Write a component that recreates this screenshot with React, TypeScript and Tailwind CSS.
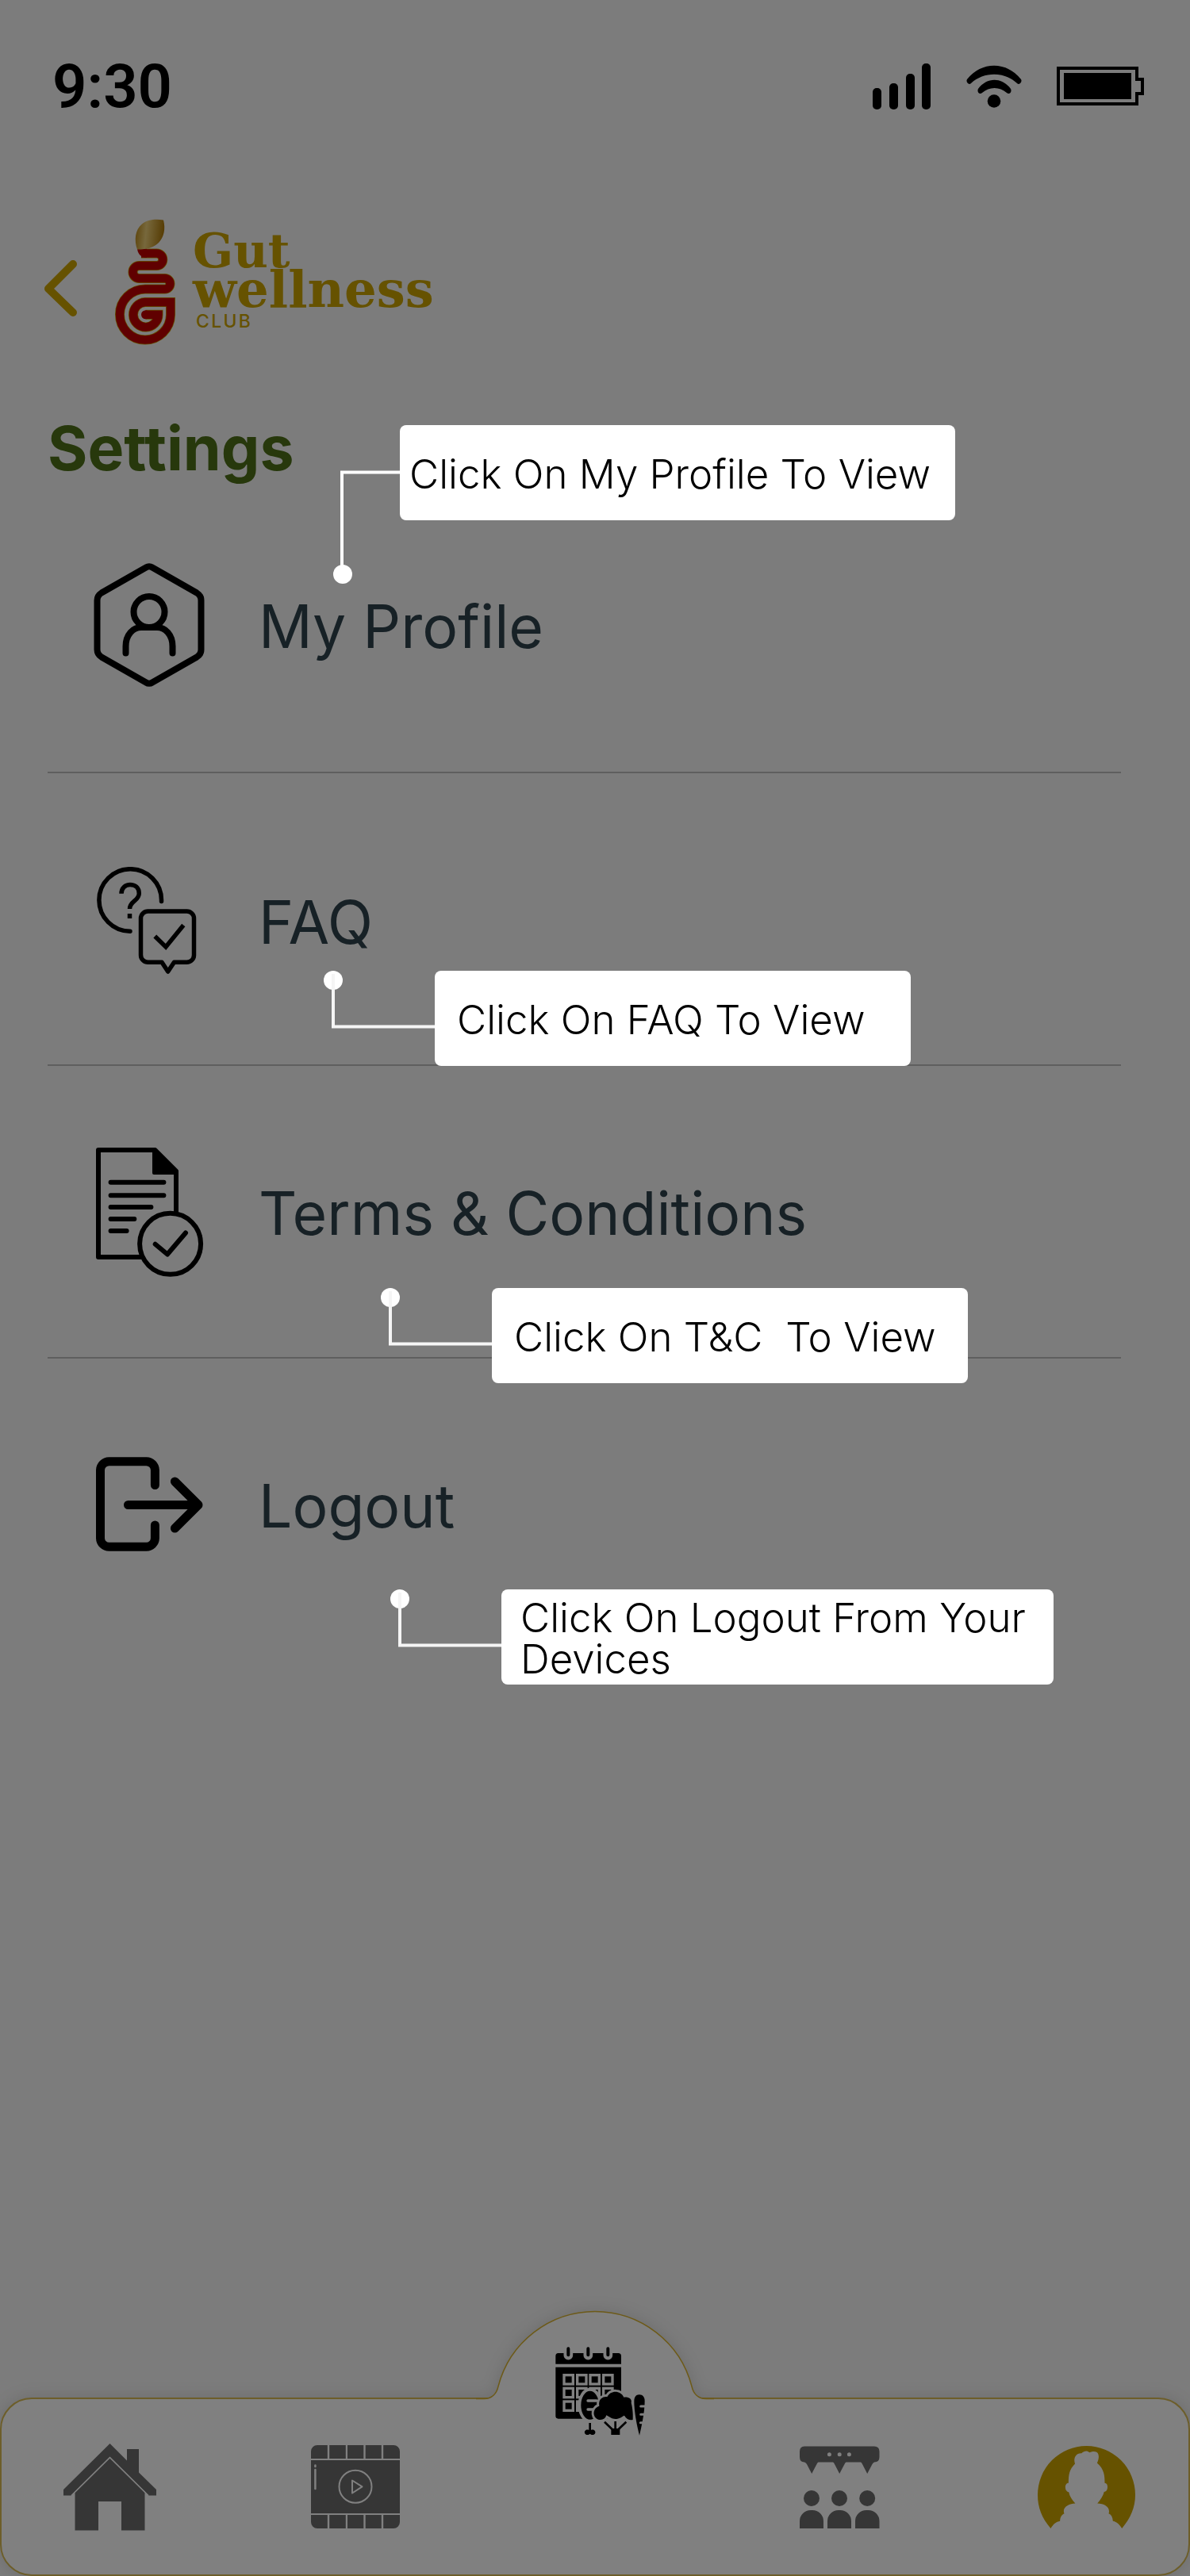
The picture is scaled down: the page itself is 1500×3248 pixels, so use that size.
import type { ReactNode } from "react";

function SignalIcon() {
  return (
    <svg width="74" height="58" viewBox="1100 80 74 58" aria-hidden="true">
      <rect x="1100" y="111" width="11" height="27" rx="5" />
      <rect x="1121" y="105" width="11" height="33" rx="5" />
      <rect x="1142" y="93" width="11" height="45" rx="5" />
      <rect x="1162" y="80" width="11" height="58" rx="5" />
    </svg>
  );
}

function WifiIcon() {
  return (
    <svg width="70" height="54" viewBox="0 0 70 54" aria-hidden="true">
      <path d="M1 18C19-5 51-5 69 18C71 21 67 26 64 23C48 8 22 8 6 23C3 26-1 21 1 18Z" />
      <path d="M15 30C26 15 45 15 56 30C58 34 54 38 51 35C42 27 29 27 20 35C17 38 13 34 15 30Z" />
      <circle cx="35" cy="45.500" r="8.300" />
    </svg>
  );
}

function BatteryIcon() {
  return (
    <svg width="110" height="50" viewBox="0 0 110 50" aria-hidden="true">
      <path
        d="M2 2H101V16H108V34H101V47H2Z"
        fill="none"
        stroke="#000"
        strokeWidth="4"
      />
      <rect x="9" y="8" width="85" height="33" />
    </svg>
  );
}

function BackIcon() {
  return (
    <svg width="41" height="72" viewBox="0 0 41 72" fill="none" aria-hidden="true">
      <path
        d="M36 5L5 36L36 66"
        stroke="#665200"
        strokeWidth="10"
        strokeLinecap="round"
        strokeLinejoin="round"
      />
    </svg>
  );
}

const TUBE =
  "M177 319.500H196.500A7.750 7.750 0 0 1 196.500 335H174.500A8 8 0 0 0 174.500 351H206.700A6.750 6.750 0 0 1 206.700 364.500H182A32 32 0 1 0 214 397V381H182A15.750 15.750 0 1 0 198.500 396.750H182.500";

function LogoMark() {
  return (
    <svg width="76" height="160" viewBox="144 276 76 160" fill="none" aria-hidden="true">
      <defs>
        <linearGradient id="leaf" x1="0" y1="0" x2="1" y2="0.100">
          <stop offset="0" stopColor="#5c430a" />
          <stop offset="0.400" stopColor="#77683c" />
          <stop offset="1" stopColor="#573d05" />
        </linearGradient>
      </defs>
      <path d={TUBE} stroke="#665200" strokeWidth="12" />
      <path d={TUBE} stroke="#600000" strokeWidth="10.500" />
      <circle cx="182.500" cy="396.750" r="5.500" fill="#600000" />
      <path d="M172 313.500H184V325H184C177 325 172.500 320 172 313.500Z" fill="#600000" />
      <path
        d="M172 314.500C168 303 169 290 178 282.500C185 276.500 196 276 205 277.500C208 289 205.500 299 199 306C193 312 185 314.500 172 314.500Z"
        fill="url(#leaf)"
      />
    </svg>
  );
}

function ProfileIcon() {
  return (
    <svg
      width="140"
      height="156"
      viewBox="118 710 140 156"
      fill="none"
      stroke="#000"
      strokeWidth="8"
      strokeLinecap="round"
      aria-hidden="true"
    >
      <path d="M184 715.500Q188 713 192 715.500L248 747.500Q253.500 751 253.500 757V819Q253.500 825 248 828.500L192 860.500Q188 863 184 860.500L128 828.500Q122.500 825 122.500 819V757Q122.500 751 128 747.500Z" />
      <circle cx="188" cy="771.500" r="19.500" />
      <path d="M158.500 823.500V815C158.500 800 168 791 178 791H198C208 791 217.500 800 217.500 815V823.500" />
    </svg>
  );
}

function FaqIcon() {
  return (
    <svg
      width="140"
      height="136"
      viewBox="118 1094 140 136"
      fill="none"
      stroke="#000"
      strokeWidth="5.500"
      aria-hidden="true"
    >
      <path d="M203.500 1137.500V1136A39.300 39.300 0 1 0 164 1175.300" strokeLinecap="round" />
      <path d="M153 1127.700C153 1120.500 158 1116.500 164 1116.500C170.500 1116.500 175.300 1120.500 175.300 1127.500C175.300 1137 163.500 1137 163.500 1147" />
      <path d="M163.500 1153V1159" />
      <path
        d="M187 1150H235.500A9 9 0 0 1 244.500 1159V1205.300A9 9 0 0 1 235.500 1214.300H219.500L211.700 1226L204 1214.300H187A9 9 0 0 1 177.500 1205.300V1159A9 9 0 0 1 187 1150Z"
        strokeLinejoin="round"
      />
      <path d="M195.300 1181.500L209 1195L231.300 1167.500" />
    </svg>
  );
}

function TermsIcon() {
  return (
    <svg
      width="140"
      height="166"
      viewBox="118 1444 140 166"
      fill="none"
      stroke="#000"
      strokeWidth="6"
      strokeLinecap="round"
      strokeLinejoin="round"
      aria-hidden="true"
    >
      <path d="M178.500 1584H124V1449H195.500L222 1475.500V1527" strokeLinecap="butt" />
      <path d="M194 1451V1478H221Z" fill="#000" strokeWidth="4" />
      <path d="M139.600 1489.700H206.400M139.600 1506.300H206.400M139.600 1521H190.400M139.600 1536H169.300M139.600 1551H159.600" />
      <circle cx="214.600" cy="1567.300" r="38.500" />
      <path d="M195.700 1567.700L211 1580.500L234 1553.500" />
    </svg>
  );
}

function LogoutIcon() {
  return (
    <svg
      width="140"
      height="120"
      viewBox="118 1836 140 120"
      fill="none"
      stroke="#000"
      strokeWidth="11"
      strokeLinecap="round"
      strokeLinejoin="round"
      aria-hidden="true"
    >
      <path d="M195.400 1871.500V1852.500A11 11 0 0 0 184.500 1841.700H137.500A11 11 0 0 0 126.500 1852.500V1938.500A11 11 0 0 0 137.500 1949.300H184.500A11 11 0 0 0 195.400 1938.500V1922" />
      <path d="M161.500 1896.500H249.500M220.400 1867L250 1896.500L220.400 1926" />
    </svg>
  );
}

function HomeIcon() {
  return (
    <svg width="117" height="110" viewBox="80 3079 117 110" fill="#363636" aria-hidden="true">
      <path d="M138.500 3079L160 3100.500V3086H175V3115.500L197 3137V3144.500H187.500L138.500 3096L89.500 3144.500H80V3137Z" />
      <path d="M138.500 3097.500L182.500 3141V3188.500H153V3152H124V3188.500H94.500V3141Z" />
      <path d="M90 3144.500L138.500 3096.500L187 3144.500" fill="none" stroke="#808080" strokeWidth="1.500" />
    </svg>
  );
}

function VideoIcon() {
  return (
    <svg width="112" height="105" viewBox="392 3082 112 105" fill="#363636" aria-hidden="true">
      <path d="M400 3082H412.800V3099H392V3090A8 8 0 0 1 400 3082ZM415.200 3082H435.800V3099H415.200ZM438 3082H458.300V3099H438ZM460.700 3082H480.800V3099H460.700ZM483.200 3082H496A8 8 0 0 1 504 3090V3099H483.200Z" />
      <path d="M392 3101H504V3168H392Z" />
      <path d="M392 3170H412.800V3187H400A8 8 0 0 1 392 3179ZM415.200 3170H435.800V3187H415.200ZM438 3170H458.300V3187H438ZM460.700 3170H480.800V3187H460.700ZM483.200 3170H504V3179A8 8 0 0 1 496 3187H483.200Z" />
      <g fill="none" stroke="#808080" strokeWidth="2" strokeLinejoin="round" strokeLinecap="round">
        <circle cx="448" cy="3134.300" r="20.500" />
        <path d="M444 3126.500L456.500 3134.300L444 3142.500Z" />
        <path d="M397.400 3107.500V3109M397.400 3113V3137" strokeWidth="2.500" />
      </g>
    </svg>
  );
}

function MealPlanIcon() {
  const cells: [number, number][] = [
    [387, 308], [437, 308], [486, 308], [536, 308],
    [387, 358], [437, 358], [486, 358], [536, 358],
    [387, 408], [437, 408],
  ];
  return (
    <svg width="113" height="112" viewBox="359 206 339 336" aria-hidden="true">
      <path d="M370 230H597Q608 230 608 241V271H360V241Q360 230 370 230ZM360 283H608V478H370Q360 478 360 468Z" />
      <path d="M408 226V238M483 226V238M558 226V238" stroke="#808080" strokeWidth="35" strokeLinecap="round" />
      <path d="M380 206H436V229H380ZM455 206H511V229H455ZM530 206H586V229H530Z" fill="#808080" />
      <path d="M408 213V237M483 213V237M558 213V237" stroke="#000" strokeWidth="12" strokeLinecap="round" />
      {cells.map(([x, y]) => (
        <rect
          key={`${x}-${y}`}
          x={x + 5}
          y={y + 5}
          width="34"
          height="34"
          fill="none"
          stroke="#808080"
          strokeWidth="10"
        />
      ))}
      <ellipse cx="490" cy="427" rx="34" ry="55" stroke="#808080" strokeWidth="22" />
      <ellipse cx="490" cy="427" rx="34" ry="54" />
      <path d="M482 410H515M482 443H508" stroke="#808080" strokeWidth="10" strokeLinecap="round" />
      <path d="M486 494H494V521C503 517 512 523 510 532C507 541 495 541 490 535C485 541 473 541 470 532C468 523 477 517 486 521Z" />
      <path
        d="M530 482C500 482 495 440 525 430C520 400 545 393 555 396C568 370 605 370 618 397C635 395 650 402 646 418C652 440 653 465 652 482C640 485 628 480 620 466C610 470 603 479 586 479C572 479 563 470 552 465C549 476 541 482 530 482Z"
        stroke="#808080"
        strokeWidth="18"
        strokeLinejoin="round"
        paintOrder="stroke"
      />
      <path d="M570 515H603V539H570Z" />
      <path d="M545 490L574 518M627 490L598 518M586 488V518" stroke="#000" strokeWidth="8" />
      <path d="M676 387C690 387 697 397 697 411C697 452 686 503 677 541C667 503 657 452 657 411C657 397 664 387 676 387Z" />
      <path d="M682 431H698M682 462H698M681 493H696" stroke="#808080" strokeWidth="9" strokeLinecap="round" />
    </svg>
  );
}

function CommunityIcon() {
  return (
    <svg width="101" height="104" viewBox="1008 3082 101 104" fill="#363636" aria-hidden="true">
      <path d="M1014 3082.500H1102Q1108.500 3082.500 1108.500 3089V3096Q1108.500 3102.500 1102 3102.500Q1100.500 3103 1099.500 3105L1093.200 3117L1087 3105Q1086 3102.500 1085 3102.500H1066.500Q1065.500 3102.500 1064.500 3105L1058.200 3117L1052 3105Q1051 3102.500 1050 3102.500H1031.500Q1030.500 3102.500 1029.500 3105L1023.200 3117L1017 3105Q1016 3103 1014 3102.500Q1008 3102.500 1008 3096V3089Q1008 3082.500 1014 3082.500Z" />
      <g fill="#808080">
        <circle cx="1045.400" cy="3092.800" r="2.500" />
        <circle cx="1058.200" cy="3092.800" r="2.500" />
        <circle cx="1070.400" cy="3092.800" r="2.500" />
      </g>
      <circle cx="1023" cy="3148" r="10" />
      <circle cx="1058" cy="3148" r="10" />
      <circle cx="1093.200" cy="3148" r="10" />
      <path d="M1008 3186V3177A14 14 0 0 1 1022 3163H1024A14 14 0 0 1 1038 3177V3186ZM1043 3186V3177A14 14 0 0 1 1057 3163H1059A14 14 0 0 1 1073 3177V3186ZM1078 3186V3177A14 14 0 0 1 1092 3163H1094.500A14 14 0 0 1 1108.500 3177V3186Z" />
    </svg>
  );
}

function AccountIcon() {
  return (
    <svg
      width="123"
      height="104"
      viewBox="1030 307 345 311"
      preserveAspectRatio="none"
      fill="#665200"
      aria-hidden="true"
    >
      <path d="M1076 618C1045 580 1030 540 1030 492A172.500 185 0 0 1 1375 492C1375 540 1358 580 1328 618C1318 600 1308 592 1296 590C1295 575 1290 566 1281 562C1288 540 1268 524 1241 524C1252 510 1262 495 1265 480C1280 480 1281 446 1267 447C1267 420 1266 395 1240 371C1252 345 1246 318 1213 332C1205 324 1195 325 1185 335C1165 333 1155 355 1162 374C1142 395 1139 415 1139 447C1124 446 1124 480 1140 481C1143 498 1152 510 1163 524C1140 524 1115 540 1124 562C1113 568 1109 578 1109 590C1095 592 1084 603 1076 618Z" />
    </svg>
  );
}

/** Tutorial bubble with an elbow line that ends in a dot on the item it explains. */
function Callout({
  place,
  connector,
  children,
}: {
  place: string;
  connector: "down" | "up";
  children: ReactNode;
}) {
  return (
    <div
      className={`absolute z-10 flex h-[120px] items-center rounded-lg bg-white pt-1 text-[51px] leading-[52px] font-light text-black ${place}`}
    >
      {connector === "down" ? (
        <svg className="absolute top-[57px] right-full" width="84" height="144" viewBox="0 0 84 144" aria-hidden="true">
          <path d="M84 2.500H11V130" fill="none" stroke="#fff" strokeWidth="4" />
          <circle cx="12" cy="131" r="12" fill="#fff" />
        </svg>
      ) : (
        <svg className="absolute top-0 right-full" width="140" height="74" viewBox="0 0 140 74" aria-hidden="true">
          <circle cx="12" cy="12" r="12" fill="#fff" />
          <path d="M12 4V70.500H140" fill="none" stroke="#f5f5f5" strokeWidth="4" />
        </svg>
      )}
      <p className="whitespace-pre-line">{children}</p>
    </div>
  );
}

function SettingsRow({
  icon,
  label,
  callout,
  align = "",
}: {
  icon: ReactNode;
  label: string;
  callout: ReactNode;
  align?: string;
}) {
  return (
    <li className="relative border-b-2 border-[#5f5f5f] last:border-b-0">
      <a href="#" className={`flex min-h-[367px] items-center gap-[68px] pl-[58px] ${align}`}>
        {icon}
        <span className="pt-1 text-[75px] leading-[88px] font-normal text-[#172126]">{label}</span>
      </a>
      {callout}
    </li>
  );
}

function BottomNav() {
  return (
    <nav className="relative mt-auto h-[225px] drop-shadow-[0_0_10px_rgba(0,0,0,0.12)]" aria-label="Main">
      <div className="absolute inset-0 rounded-[40px] border-2 border-[#6d5e2a] bg-[#808080]" />
      <svg
        className="absolute bottom-[220px] left-1/2 -translate-x-1/2"
        width="300"
        height="115"
        viewBox="600 2912 300 115"
        aria-hidden="true"
      >
        <path
          d="M600 3027V3024H610C620 3024 626 3017 628 3008A126 126 0 0 1 872 3008C874 3017 880 3024 890 3024H900V3027Z"
          fill="#808080"
        />
        <path
          d="M600 3023.500H610C620 3023.500 626 3017 628 3008A126 126 0 0 1 872 3008C874 3017 880 3023.500 890 3023.500H900"
          fill="none"
          stroke="#6d5a18"
          strokeWidth="1.500"
        />
      </svg>
      <div className="relative flex h-full items-center justify-between pr-[69px] pl-[80px]">
        <a href="#" aria-label="Home"><HomeIcon /></a>
        <a href="#" aria-label="Videos"><VideoIcon /></a>
        <a href="#" aria-label="Meal plan" className="mb-[242px]"><MealPlanIcon /></a>
        <a href="#" aria-label="Community"><CommunityIcon /></a>
        <a href="#" aria-label="Account" className="ml-1"><AccountIcon /></a>
      </div>
    </nav>
  );
}

export default function App() {
  return (
    <div className="flex min-h-screen flex-col overflow-hidden bg-[#7c7c7c] font-[Inter,sans-serif]">
      <div className="flex items-center justify-between pt-16 pr-[58px] pl-[66px]">
        <time className="font-[Roboto,sans-serif] text-[76px] leading-[90px] font-semibold text-black">9:30</time>
        <div className="flex items-center gap-11">
          <SignalIcon />
          <WifiIcon />
          <BatteryIcon />
        </div>
      </div>

      <header className="flex items-center pt-[122px] pl-14">
        <button type="button" aria-label="Back" className="mt-4">
          <BackIcon />
        </button>
        <div className="ml-[48px] flex items-center gap-[22px]">
          <LogoMark />
          <div className="font-['DejaVu_Serif',serif] font-bold text-[#665200]">
            <p className="text-[60px] leading-[46px]">Gut</p>
            <p className="text-[64px] leading-[52px]">wellness</p>
            <p className="pl-1 font-[Inter,sans-serif] text-[23px] leading-7 font-medium tracking-widest">CLUB</p>
          </div>
        </div>
      </header>

      <h1 className="mt-[88px] pl-[60px] text-[77px] leading-[83px] font-bold text-[#27380c]">Settings</h1>

      <ul className="-mt-px mr-[87px] ml-[60px]">
        <SettingsRow
          icon={<ProfileIcon />}
          label="My Profile"
          align="pb-1"
          callout={
            <Callout connector="down" place="top-[-70px] left-[444px] w-[700px] pl-3">
              Click On My Profile To View
            </Callout>
          }
        />
        <SettingsRow
          icon={<FaqIcon />}
          label="FAQ"
          align="pt-1"
          callout={
            <Callout connector="up" place="top-[249px] left-[488px] w-[600px] pl-7">
              Click On FAQ To View
            </Callout>
          }
        />
        <SettingsRow
          icon={<TermsIcon />}
          label="Terms & Conditions"
          callout={
            <Callout connector="up" place="top-[280px] left-[560px] w-[600px] pl-7">
              Click On T&amp;C{"\u00a0 "}To View
            </Callout>
          }
        />
        <SettingsRow
          icon={<LogoutIcon />}
          label="Logout"
          callout={
            <Callout connector="up" place="top-[291px] left-[572px] w-[696px] pl-6">
              {"Click On Logout From Your\nDevices"}
            </Callout>
          }
        />
      </ul>

      <BottomNav />
    </div>
  );
}
